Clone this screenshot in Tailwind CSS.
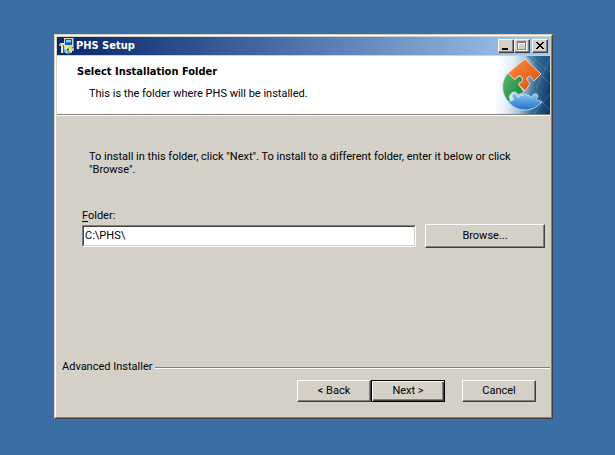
<!DOCTYPE html>
<html lang="en">
<head>
<meta charset="utf-8">
<title>PHS Setup</title>
<script src="https://cdn.jsdelivr.net/npm/@tailwindcss/browser@4"></script>
</head>
<body class="flex min-h-screen bg-[#3a6ea5] pt-[34px] pr-[62px] pb-9 pl-[54px] font-[Roboto,'DejaVu_Sans',sans-serif] text-[11px] leading-[14px] text-black">
<div class="flex flex-1 border border-t-[#d4d0c8] border-r-[#404040] border-b-[#404040] border-l-[#d4d0c8]">
<div class="flex flex-1 flex-col border border-t-white border-r-[#808080] border-b-[#808080] border-l-white bg-[#d4d0c8] p-px">

  <div class="mb-px flex h-[18px] items-center bg-linear-to-r from-[#0a246a] to-[#a6caf0] pr-[2px] pl-[2px] font-['DejaVu_Sans_Condensed','DejaVu_Sans',sans-serif] font-bold text-white">
    <svg class="mr-px h-4 w-4" viewBox="0 0 16 16" aria-hidden="true">
      <path d="M5 0h10v9H5z" fill="#d8d4c8"/><path d="M14 0h1v10H5V9h9z" fill="#77777b"/>
      <path d="M6 1h7v6H6z" fill="#1557b8"/><path d="M7 2h5v2H7z" fill="#6cd4f4"/><path d="M7 4h4v1H7z" fill="#2c91dd"/>
      <path d="M1 5h4v2H1zM2 7h2v8H2z" fill="#eae7d3"/><path d="M0 6h2v2H0z" fill="#a7a18a"/><path d="M4 7h1v8H4z" fill="#5c5a50"/>
      <path d="M11 10h4v3h-2v2h-2z" fill="#bdb9aa"/>
      <circle cx="9" cy="11.500" r="4" fill="#d6e9df"/><path d="M9 11.500V7.500a4 4 0 0 1 4 4z" fill="#e5d94a"/><path d="M9 11.500l-3 3a4 4 0 0 1-1-3z" fill="#53b5cb"/><path d="M9 11.500l2.500 3.200A4 4 0 0 1 8 15.400z" fill="#59a566"/><circle cx="9" cy="11.500" r="1" fill="#25405f"/>
    </svg>
    <span class="flex-1">PHS Setup</span>
    <button aria-label="Minimize" class="h-[14px] w-4 border border-t-white border-r-[#404040] border-b-[#404040] border-l-white bg-[#d4d0c8] shadow-[inset_-1px_-1px_#808080]">
      <svg class="h-3 w-[14px]" viewBox="0 0 14 12" shape-rendering="crispEdges"><path d="M3 8h6v2H3z"/></svg>
    </button>
    <button aria-label="Maximize" disabled class="mr-[2px] h-[14px] w-4 border border-t-white border-r-[#404040] border-b-[#404040] border-l-white bg-[#d4d0c8] shadow-[inset_-1px_-1px_#808080]">
      <svg class="h-3 w-[14px]" viewBox="0 0 14 12" shape-rendering="crispEdges" fill="none"><path d="M3.500 2.500h8v8h-8zM3 3.500h9" stroke="#fff"/><path d="M2.500 1.500h8v8h-8zM2 2.500h9" stroke="#808080"/></svg>
    </button>
    <button aria-label="Close" class="h-[14px] w-4 border border-t-white border-r-[#404040] border-b-[#404040] border-l-white bg-[#d4d0c8] shadow-[inset_-1px_-1px_#808080]">
      <svg class="h-3 w-[14px]" viewBox="0 0 14 12" shape-rendering="crispEdges"><path d="M3 2h2v1h1v1h2V3h1V2h2v1h-1v1H9v1H8v1h1v1h1v1h1v1H9V8H8V7H6v1H5v1H3V8h1V7h1V6h1V5H5V4H4V3H3z"/></svg>
    </button>
  </div>

  <header class="flex justify-between border-b border-[#808080] bg-white shadow-[0_1px_#fff]">
    <div class="pt-[9px] pb-[13px] pl-5">
      <h1 class="font-['DejaVu_Sans_Condensed','DejaVu_Sans',sans-serif] font-bold">Select Installation Folder</h1>
      <p class="mt-2 pl-3">This is the folder where PHS will be installed.</p>
    </div>
    <svg class="h-[58px] w-[54px]" viewBox="0 0 54 58" aria-hidden="true">
      <defs>
        <linearGradient id="sky" x1="0" y1=".35" x2="1" y2=".5"><stop offset="0" stop-color="#fff"/><stop offset=".28" stop-color="#e4edf5"/><stop offset=".5" stop-color="#a6c2d8"/><stop offset=".72" stop-color="#3d719c"/><stop offset="1" stop-color="#103e68"/></linearGradient>
        <linearGradient id="orange" x1="0" y1="0" x2="1" y2="1"><stop offset="0" stop-color="#fc9143"/><stop offset="1" stop-color="#dc4908"/></linearGradient>
        <linearGradient id="green" x1="0" y1="0" x2="1" y2="1"><stop offset="0" stop-color="#62b978"/><stop offset="1" stop-color="#087b35"/></linearGradient>
        <linearGradient id="blue" x1="0" y1="0" x2="0" y2="1"><stop offset="0" stop-color="#85c3f2"/><stop offset="1" stop-color="#216fc5"/></linearGradient>
      </defs>
      <path d="M0 0h54v58H0z" fill="url(#sky)"/>
      <path d="M30 0h24v14L44 11z" fill="#235b88" opacity=".45"/>
      <path d="M34 0l20 16M54 3L40 32M46 20l8 8M54 38L38 58M42 42l12 12" fill="none" stroke="#79a5c5" stroke-width=".7" opacity=".6"/>
      <path d="M12 17C4 26 5 40 15 48C16 46 12 42 14 39C16 35 21 35 22 39C25 37 27 37 28 36L23 29C22 28 23 27 24 27C28 26 27 20 23 20C20 20 20 25 18 23z" fill="url(#green)" stroke="#cce5d3" stroke-width=".8"/>
      <path d="M29 3L45 18L39 24C37 26 37 24 36 22C34 19 30 21 31 24C32 26 34 26 34 28L29 35L23 29C22 28 23 27 24 27C28 26 27 20 23 20C20 20 20 25 18 23L12 17z" fill="url(#orange)" stroke="#ffdfc8" stroke-width=".9"/>
      <path d="M12 46C15 44 19 45 17 42C14 39 19 36 21 39C22 41 20 42 23 41C27 38 31 38 35 41C37 42 36 41 37 39C39 36 44 39 41 42C39 45 43 44 46 46C40 52 35 54 29 54S18 52 12 46z" fill="url(#blue)" stroke="#c5e4fc" stroke-width=".9"/>
    </svg>
  </header>

  <main class="flex-1 pt-[35px] pr-[5px] pl-[25px]">
    <p class="pr-4 pl-[7px] leading-[13px]">To install in this folder, click "Next". To install to a different folder, enter it below or click "Browse".</p>
    <label for="folder" class="mt-[33px] mb-[2px] block leading-[13px]"><span class="underline underline-offset-2">F</span>older:</label>
    <div class="flex items-center gap-[9px]">
      <div class="flex h-[22px] flex-1 border border-t-[#808080] border-r-white border-b-white border-l-[#808080]">
        <input id="folder" type="text" value="C:\PHS\" class="min-w-0 flex-1 border border-t-[#404040] border-r-[#d4d0c8] border-b-[#d4d0c8] border-l-[#404040] bg-white px-px outline-none">
      </div>
      <button class="h-6 w-[120px] border border-t-white border-r-[#404040] border-b-[#404040] border-l-white shadow-[inset_-1px_-1px_#808080]">Browse...</button>
    </div>
  </main>

  <footer class="pb-[14px]">
    <div class="flex items-center gap-[3px] pl-[5px]">
      <span>Advanced Installer</span>
      <div class="mt-[2px] h-[2px] flex-1 border-t border-b border-t-[#808080] border-b-white"></div>
    </div>
    <div class="mt-[6px] flex justify-end pr-[14px]">
      <button class="h-[22px] w-[74px] border border-t-white border-r-[#404040] border-b-[#404040] border-l-white shadow-[inset_-1px_-1px_#808080]">&lt; Back</button>
      <button class="h-[22px] w-[74px] border border-black shadow-[inset_1px_1px_#fff,inset_-1px_-1px_#404040,inset_-2px_-2px_#808080]">Next &gt;</button>
      <button class="ml-[17px] h-[22px] w-[74px] border border-t-white border-r-[#404040] border-b-[#404040] border-l-white shadow-[inset_-1px_-1px_#808080]">Cancel</button>
    </div>
  </footer>
</div>
</div>
</body>
</html>
